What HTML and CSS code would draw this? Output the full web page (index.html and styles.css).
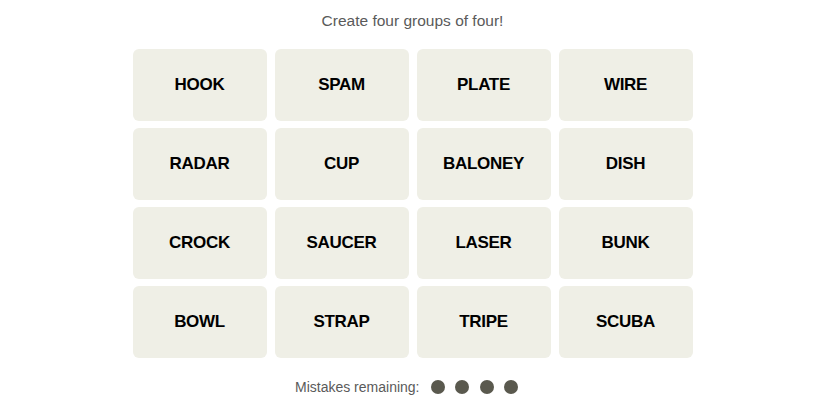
FILE: index.html
```html
<!DOCTYPE html>
<html>
<head>
<meta charset="utf-8">
<link rel="stylesheet" href="styles.css">
</head>
<body>
<main class="game">
  <p class="prompt">Create four groups of four!</p>
  <div class="board">
    <div class="tile">HOOK</div>
    <div class="tile">SPAM</div>
    <div class="tile">PLATE</div>
    <div class="tile">WIRE</div>
    <div class="tile">RADAR</div>
    <div class="tile">CUP</div>
    <div class="tile">BALONEY</div>
    <div class="tile">DISH</div>
    <div class="tile">CROCK</div>
    <div class="tile">SAUCER</div>
    <div class="tile">LASER</div>
    <div class="tile">BUNK</div>
    <div class="tile">BOWL</div>
    <div class="tile">STRAP</div>
    <div class="tile">TRIPE</div>
    <div class="tile">SCUBA</div>
  </div>
  <div class="mistakes">
    <span class="mistakes-label">Mistakes remaining:</span>
    <span class="dots">
      <span class="dot"></span><span class="dot"></span><span class="dot"></span><span class="dot"></span>
    </span>
  </div>
</main>
</body>
</html>
```
FILE: styles.css
```css
html, body {
  margin: 0;
  padding: 0;
  background: #ffffff;
}
body {
  font-family: "Liberation Sans", Arial, sans-serif;
  color: #000;
}
.game {
  display: flex;
  flex-direction: column;
  align-items: center;
  padding-top: 11px;
}
.prompt {
  margin: 0;
  font-size: 15.5px;
  line-height: 20px;
  color: #5a5a5a;
}
.board {
  margin-top: 18px;
  display: grid;
  grid-template-columns: repeat(4, 134px);
  grid-auto-rows: 72px;
  column-gap: 8px;
  row-gap: 7px;
}
.tile {
  background: #efefe6;
  border-radius: 6px;
  display: flex;
  align-items: center;
  justify-content: center;
  font-weight: 700;
  font-size: 17px;
  letter-spacing: -0.3px;
  color: #000;
}
.mistakes {
  margin-top: 21px;
  padding-right: 12px;
  display: flex;
  align-items: center;
  gap: 11px;
  font-size: 14px;
  color: #5a5a5a;
}
.dots {
  display: flex;
  gap: 10.5px;
}
.dot {
  width: 14px;
  height: 14px;
  border-radius: 50%;
  background: #5a594e;
}
```
